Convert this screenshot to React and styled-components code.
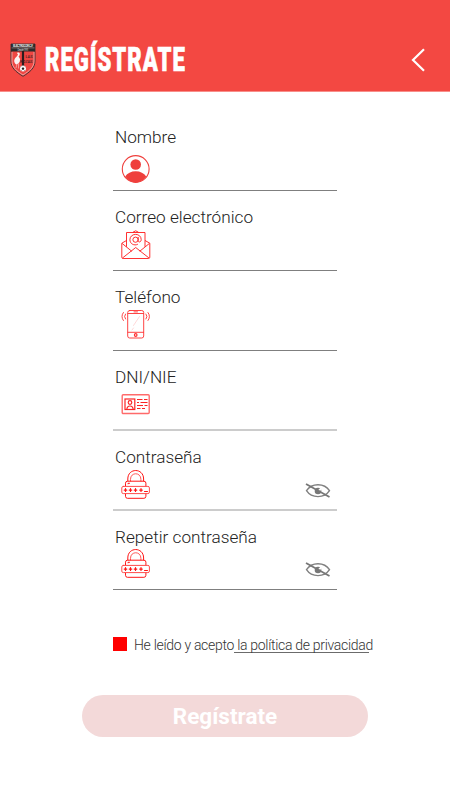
import React, { useState } from "react";
import styled, { createGlobalStyle } from "styled-components";

const GlobalStyle = createGlobalStyle`
  * {
    box-sizing: border-box;
  }

  body {
    margin: 0;
    background: #ffffff;
    font-family: Roboto, sans-serif;
  }
`;

const Crest = () => (
  <svg width="26" height="34" viewBox="0 0 26 34">
    <path
      d="M1 1h24v17c0 7-5 11-12 15.300C6 29 1 25 1 18z"
      fill="#ef4642"
      stroke="#4a3334"
      strokeWidth="1"
    />
    <path
      d="M2 9v9c0 6 4 9.500 11 14 7-4.500 11-8 11-14V9"
      fill="none"
      stroke="#f3b5b2"
      strokeWidth="0.800"
    />
    <path d="M1 1h24v7.500H1z" fill="#2b2b2b" />
    <text
      x="13"
      y="4"
      fontSize="3.200"
      fontWeight="700"
      fill="#e2e2e2"
      textAnchor="middle"
      textLength="20"
    >
      ELECTROCOR C.F.
    </text>
    <path d="M1.500 4.900h23" stroke="#d8b5b5" strokeWidth="0.500" />
    <text
      x="13"
      y="7.600"
      fontSize="2.600"
      fill="#cfcfcf"
      textAnchor="middle"
      textLength="11"
    >
      Desde 1991
    </text>
    <path d="M11.900 8h2.200v15h-2.200z" fill="#2b1d1e" />
    <path
      d="M7 10c2-1.200 3.500.3 2.500 2.200l-1 1.500c2.300 2 2 5-.2 6.800l-2 1c-3-2-2.500-5.500 0-7.500l1.700-2.200z"
      fill="#fbf3f3"
    />
    <path d="M7 21l-1 4M8.500 20.500v5" stroke="#f7cfcd" strokeWidth="0.600" />
    <text
      x="15.500"
      y="15"
      fontSize="4.400"
      fontWeight="500"
      fill="#3a2223"
      textLength="7"
      lengthAdjust="spacingAndGlyphs"
    >
      LAS
    </text>
    <text
      x="10"
      y="19.500"
      fontSize="4.400"
      fontWeight="500"
      fill="#3a2223"
      textLength="12.500"
      lengthAdjust="spacingAndGlyphs"
    >
      ROZAS
    </text>
    <circle cx="13" cy="25.500" r="3" fill="#fafafa" />
    <path
      d="M13 24.200l1.300 1-.5 1.500h-1.600l-.5-1.500z"
      fill="#222"
    />
    <path
      d="M10.600 24l.8-.7M15.400 24l-.8-.7M11.200 27.700l.7-.5M14.800 27.700l-.7-.5"
      stroke="#333"
      strokeWidth="0.600"
    />
  </svg>
);

const BackIcon = () => (
  <svg width="14" height="24" viewBox="0 0 14 24" fill="none">
    <path d="M13 1.200L2 12l11 10.800" stroke="#fff" strokeWidth="2.200" />
  </svg>
);

const UserIcon = () => (
  <svg width="30" height="30" viewBox="0 0 30 30">
    <circle
      cx="14.700"
      cy="15"
      r="13.400"
      fill="none"
      stroke="#ef3f3c"
      strokeWidth="1.100"
    />
    <circle cx="14.700" cy="10.500" r="5.300" fill="#ef3f3c" />
    <path
      d="M4.200 22.600c2-3.500 6-5.400 10.500-5.400s8.500 1.900 10.500 5.400c-2.400 3.600-6.200 6-10.500 6s-8.100-2.400-10.500-6z"
      fill="#ef3f3c"
    />
  </svg>
);

const MailIcon = () => (
  <svg
    width="30"
    height="30"
    viewBox="0 0 30 30"
    fill="none"
    stroke="#ff1a1a"
    strokeWidth="0.900"
    strokeLinejoin="round"
  >
    <path d="M5.500 10.500L.8 13.200v14q0 1.300 1.300 1.300h25.400q1.300 0 1.300-1.300v-14l-4.800-2.700" />
    <path d="M1.200 13.500l9.600 7.800M28.300 13.500l-9.600 7.800M1.500 28l13.200-10.500L28 28" />
    <path d="M5.500 16.800V2.500H24v14.300M12 2.200q2.700-2.800 5.400 0" />
    <circle cx="14.500" cy="9.700" r="2.600" />
    <path d="M17.200 7v3.700c0 2 3 1.700 3-1.100 0-3.100-2.400-5.200-5.600-5.200-3.300 0-5.700 2.300-5.700 5.300 0 4.100 4.200 6.400 8 4.500" />
  </svg>
);

const PhoneIcon = () => (
  <svg
    width="30"
    height="30"
    viewBox="0 0 30 30"
    fill="none"
    stroke="#ff3030"
    strokeWidth="0.900"
    strokeLinecap="round"
  >
    <rect x="6.700" y="1.500" width="16" height="27.500" rx="2" />
    <path d="M7 4.500h15.500M7 23.300h15.500M13 2.900h3.500" />
    <path
      d="M12.500 16.500l6-9M11 21l1.500-2"
      stroke="#ffb0b0"
      strokeWidth="0.500"
    />
    <circle cx="14.700" cy="26" r="1.300" strokeWidth="1.200" />
    <path d="M4.500 5q-2 2.500 0 5M2.400 3.500q-3 4 0 8M25 5q2 2.500 0 5M27 3.500q3 4 0 8" />
  </svg>
);

const IdIcon = () => (
  <svg
    width="30"
    height="30"
    viewBox="0 0 30 30"
    fill="none"
    stroke="#fa2525"
    strokeWidth="1.200"
  >
    <rect
      x="1.200"
      y="5.700"
      width="27"
      height="18.800"
      rx="1"
      stroke="#ff6a6a"
      strokeWidth="1.400"
    />
    <rect x="4" y="10" width="9.800" height="10.500" />
    <circle cx="9" cy="13.500" r="1.800" />
    <path d="M5.800 20.500c.2-2.500 1.200-3.500 3.200-3.500s3 1 3.200 3.500" />
    <path
      d="M16 10.500h5.500m1.500 0h3.500M16 13.500h2m1.500 0h7M16 16.500h6m1.500 0h3M16 19.500h3.500m1.500 0h3"
      strokeWidth="1"
    />
  </svg>
);

const LockIcon = () => (
  <svg
    width="30"
    height="30"
    viewBox="0 0 30 30"
    fill="none"
    stroke="#ff1515"
    strokeWidth="1"
    strokeLinecap="round"
  >
    <path d="M6.800 11V9C6.800-2.300 22.600-2.300 22.600 9v2" />
    <path d="M9.500 11V9.300c0-7.400 10.400-7.400 10.400 0V11" stroke="#ff5b5b" />
    <path d="M4.500 16v-2.800q0-2 2-2h16.400q2 0 2 2V16M4.500 24v2.300q0 2 2 2h16.400q2 0 2-2V24" />
    <path d="M7 13.800v-.5h1.500" />
    <rect
      x="0.800"
      y="16.400"
      width="27.600"
      height="7.200"
      rx="1.500"
      stroke="#ff4a4a"
    />
    <path
      d="M4.500 18.700v2.800M3.200 20.100h2.600M9.500 18.700v2.800M8.200 20.100h2.600M14.500 18.700v2.800M13.200 20.100h2.600M20 18.700v2.800M18.700 20.100h2.600"
      strokeWidth="1.200"
    />
    <path d="M23.500 21.500h3" />
  </svg>
);

const HiddenIcon = () => (
  <svg
    width="26"
    height="18"
    viewBox="0 0 26 18"
    fill="none"
    stroke="#808080"
    strokeWidth="1.400"
  >
    <path d="M1.500 8.700C4 4.900 8.200 2.800 13 2.800s9 2.100 11.500 5.900C22 12.500 17.800 14.600 13 14.600S4 12.500 1.500 8.700z" />
    <circle cx="13" cy="9" r="3.300" fill="#777" stroke="none" />
    <path d="M12.500 8.700l3.500-3.500v3.300z" fill="#fff" stroke="none" />
    <path d="M1 2l23.500 13" stroke="#777" strokeWidth="1.800" />
  </svg>
);

const FIELDS = [
  { label: "Nombre", icon: UserIcon, iconTop: 43 },
  { label: "Correo electrónico", icon: MailIcon, iconTop: 39 },
  { label: "Teléfono", icon: PhoneIcon, iconTop: 38 },
  { label: "DNI/NIE", icon: IdIcon, iconTop: 38, soft: true },
  { label: "Contraseña", icon: LockIcon, iconTop: 39, soft: true, secret: true },
  {
    label: "Repetir contraseña",
    icon: LockIcon,
    iconTop: 38,
    height: 79,
    secret: true,
  },
];

const App = () => {
  const [accepted, setAccepted] = useState(true);

  return (
    <Page>
      <GlobalStyle />
      <Header>
        <Crest />
        <Heading>REGÍSTRATE</Heading>
        <BackButton aria-label="Volver">
          <BackIcon />
        </BackButton>
      </Header>
      <Form>
        {FIELDS.map(({ label, icon: Icon, iconTop, height, soft, secret }) => (
          <Field key={label} $height={height} $soft={soft}>
            <Label>{label}</Label>
            <InputRow $gap={iconTop - 36}>
              <Icon />
              {secret && <HiddenIcon />}
            </InputRow>
          </Field>
        ))}
      </Form>
      <Terms>
        <Checkbox
          role="checkbox"
          aria-checked={accepted}
          $checked={accepted}
          onClick={() => setAccepted(!accepted)}
        />
        <TermsText>
          He leído y acepto<PolicyLink> la política de privacidad</PolicyLink>
        </TermsText>
      </Terms>
      <Submit>Regístrate</Submit>
    </Page>
  );
};

const Page = styled.div`
  width: 450px;
  height: 800px;
  display: flex;
  flex-direction: column;
  background: #ffffff;
  overflow: hidden;
`;

const Header = styled.header`
  height: 92px;
  flex-shrink: 0;
  display: flex;
  align-items: center;
  padding: 29px 25px 0 10px;
  background: #f34842;
  border-bottom: 1px solid #f88e8a;
`;

const Heading = styled.h1`
  margin: 0 0 0 9px;
  width: 140px;
  font-size: 33.5px;
  line-height: 34px;
  font-weight: 900;
  letter-spacing: 1.5px;
  white-space: nowrap;
  color: #ffffff;
  -webkit-text-stroke: 0.7px #ffffff;
  transform: scaleX(0.66);
  transform-origin: left center;
`;

const BackButton = styled.button`
  display: flex;
  margin-left: auto;
  padding: 0;
  border: 0;
  background: none;
`;

const Form = styled.form`
  width: 224px;
  margin: 19px 0 0 113px;
`;

const Field = styled.div`
  height: ${({ $height }) => $height || 80}px;
  padding-top: 16px;
  border-bottom: ${({ $soft }) =>
    $soft ? "2px solid #cccccc" : "1px solid #7f7f7f"};
`;

const Label = styled.div`
  height: 20px;
  padding-left: 2px;
  font-size: 17.2px;
  line-height: 20px;
  font-weight: 300;
  white-space: nowrap;
  color: #222222;
`;

const InputRow = styled.div`
  height: 30px;
  display: flex;
  align-items: center;
  justify-content: space-between;
  margin-top: ${({ $gap }) => $gap}px;
  padding: 0 6px 0 8px;

  svg + svg {
    margin-top: 11px;
  }
`;

const Terms = styled.div`
  display: flex;
  align-items: center;
  height: 20px;
  margin: 45px 0 0 113px;
`;

const Checkbox = styled.div`
  width: 14px;
  height: 14px;
  margin-top: -2px;
  background: ${({ $checked }) => ($checked ? "#ff0000" : "#ffffff")};
`;

const TermsText = styled.div`
  margin-left: 7px;
  font-size: 14px;
  line-height: 20px;
  font-weight: 300;
  letter-spacing: -0.3px;
  white-space: nowrap;
  color: #333333;
`;

const PolicyLink = styled.span`
  background: linear-gradient(#6b6b6b, #6b6b6b) left bottom / 135px 1px
    no-repeat;
`;

const Submit = styled.button`
  width: 286px;
  height: 42px;
  margin: 40px 0 0 82px;
  padding: 0;
  border: 0;
  border-radius: 21px;
  background: #f3d9d9;
  color: #ffffff;
  font-family: inherit;
  font-size: 22.5px;
  font-weight: 700;
`;

export default App;
